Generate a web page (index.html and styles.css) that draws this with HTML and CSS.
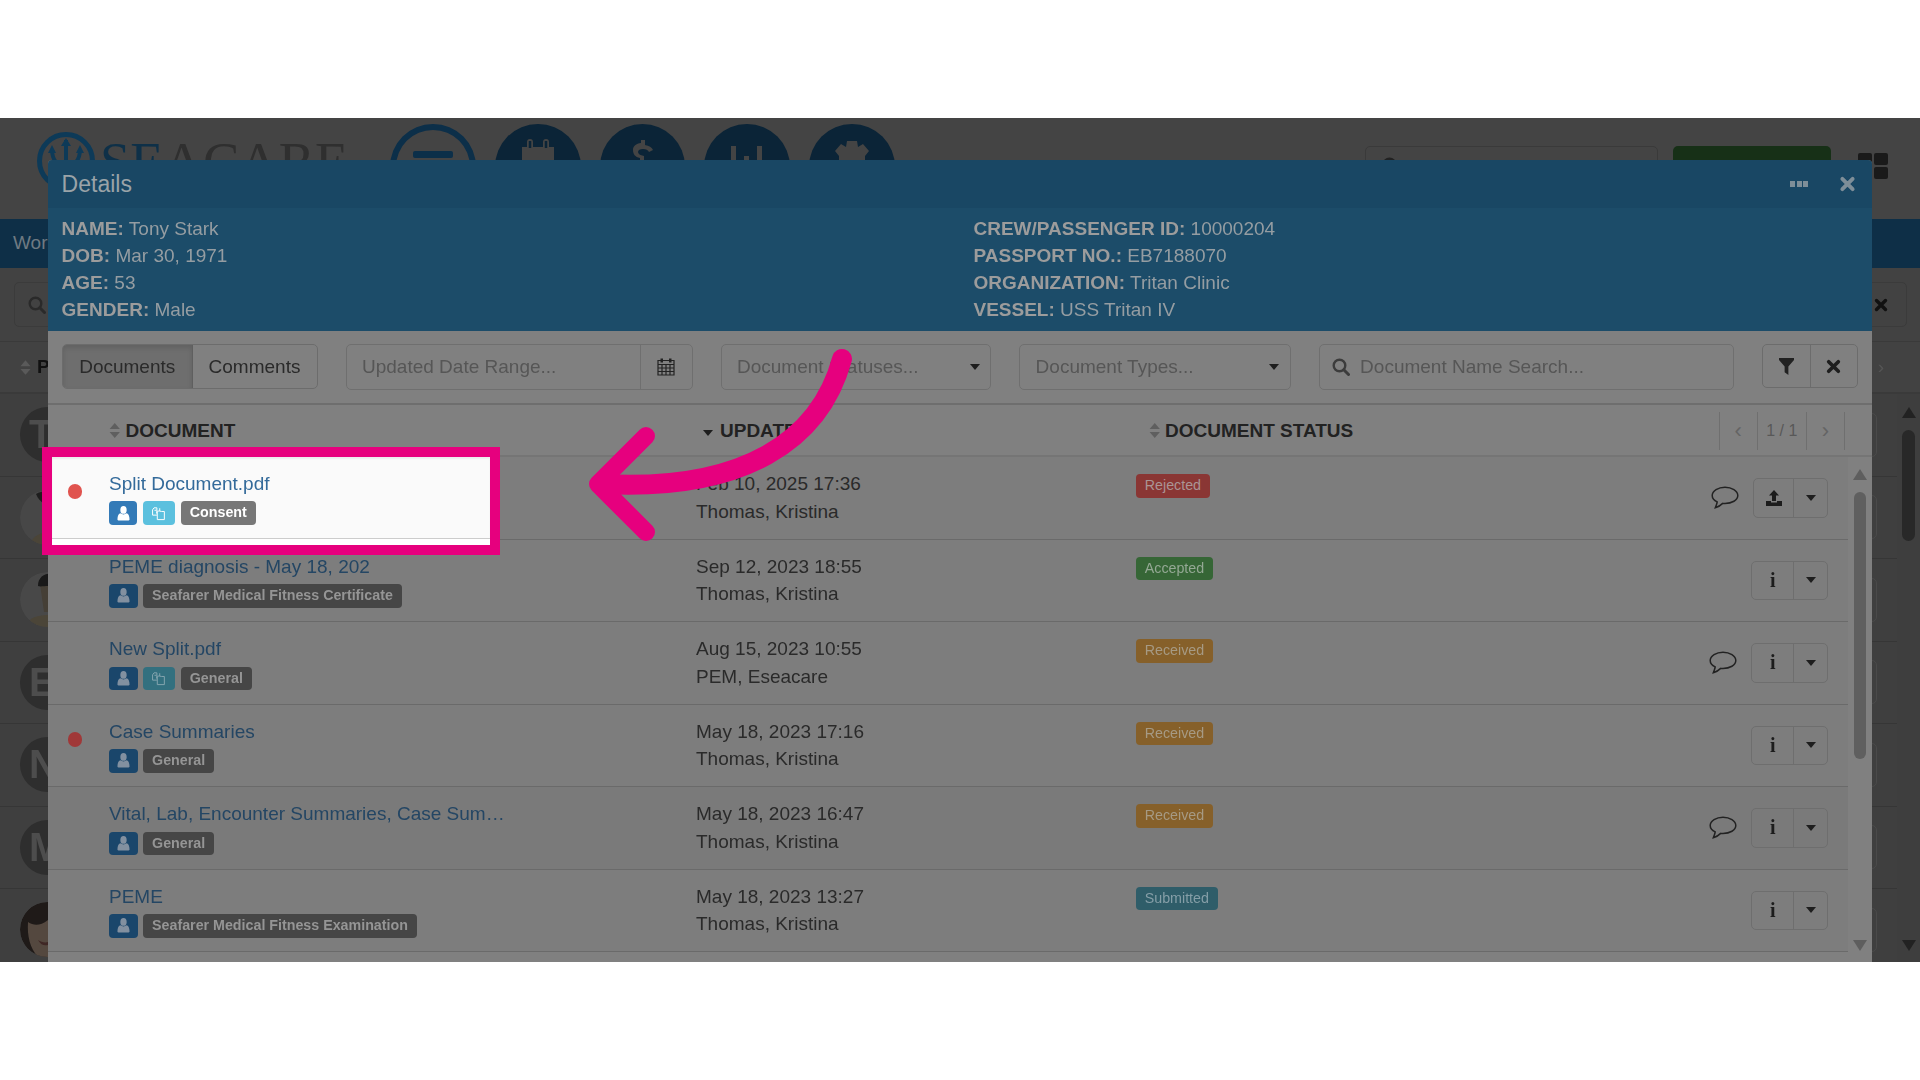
FILE: index.html
```html
<!DOCTYPE html>
<html lang="en">
<head>
  <meta charset="UTF-8">
  <title>Seacare - Details</title>
  <link rel="stylesheet" href="styles.css">
</head>
<body>
  <svg class="defs" width="0" height="0">
    <symbol id="i-sort" viewBox="0 0 12 16"><path d="M6 0l5.500 6.500H.5zM6 16L.5 9.500h11z"/></symbol>
    <symbol id="i-user" viewBox="0 0 14 16"><ellipse cx="7" cy="4.200" rx="3.400" ry="4.200"/><path d="M1.500 15.500c-.8 0-1-.5-1-1.200C.5 10.500 1.800 8 3.800 7.800c1.900 1.600 4.500 1.600 6.400 0 2 .2 3.300 2.700 3.300 6.500 0 .7-.2 1.200-1 1.200z"/></symbol>
    <symbol id="i-files" viewBox="0 0 16 16"><path d="M6 1H2.500L.7 3.500V10H6M6 1v3H3M6 5h3.500V1.500M6 5l-.5 3M6.500 5.500v10h8.700V5.500H11.500L9.500 5" fill="none" stroke="currentColor" stroke-width="1.200"/></symbol>
    <symbol id="i-times" viewBox="0 0 14 14"><path d="M2.500 2.500l9 9M11.500 2.500l-9 9" fill="none" stroke="currentColor" stroke-width="3.400" stroke-linecap="round"/></symbol>
    <symbol id="i-search" viewBox="0 0 18 18"><circle cx="7.500" cy="7.500" r="5.800" fill="none" stroke="currentColor" stroke-width="2.400"/><path d="M11.800 11.800l4.700 4.700" stroke="currentColor" stroke-width="3" stroke-linecap="round"/></symbol>
    <symbol id="i-chat" viewBox="0 0 28 23"><path d="M14 1.200C7.200 1.200 1.200 4.800 1.200 9.500c0 2.800 2 5 5 6.400-.1 1.600-.8 3.300-1.900 5.800 3-.8 5.600-2.500 7.400-4.300 1 .1 1.600.1 2.300.1 6.800 0 12.800-3.300 12.800-8C26.800 4.800 20.800 1.200 14 1.200z" fill="none" stroke="currentColor" stroke-width="1.500"/></symbol>
  </svg>

  <div class="band"></div>

  <div class="stage">
    <!-- page behind the dialog -->
    <div class="page">
      <header class="topbar">
        <div class="logo">
          <svg class="logo-mark" viewBox="0 0 58 58"><circle cx="29" cy="29" r="26.500" fill="none" stroke="#0d3a58" stroke-width="5"/><path d="M29 8v42M15 17c0 12 6 17 14 17s14-5 14-17" fill="none" stroke="#0d3a58" stroke-width="4"/><path d="M29 6l-5 8h10zM15 13l-4 8h8zM43 13l-4 8h8z" fill="#0d3a58"/></svg>
          <span class="logo-text"><span class="logo-blue">SE</span>ACARE</span>
        </div>
        <div class="circles">
          <div class="circle circle-ring"><span class="ring-bar"></span></div>
          <div class="circle">
            <svg class="circle-icon" viewBox="0 0 40 30"><path d="M4 30V9h5V4a3 3 0 0 1 6 0v5h10V4a3 3 0 0 1 6 0v5h5v21z" fill="#444"/><path d="M12 3v7M28 3v7" stroke="#0b2437" stroke-width="2.500"/></svg>
          </div>
          <div class="circle">
            <svg class="circle-icon" viewBox="0 0 40 30"><path d="M18 2h4v5c4 .5 7 2.500 8 5l-4 2c-1-2-3-3-6-3-3 0-5 1-5 3s2 3 6 4v12h-4V20c-5-1-7-4-7-8s3-6.500 8-7z" fill="#444"/></svg>
          </div>
          <div class="circle">
            <svg class="circle-icon" viewBox="0 0 40 30"><path d="M4 8h5v22H4zM17 18h5v12h-5zM30 8h5v22h-5z" fill="#444"/></svg>
          </div>
          <div class="circle">
            <svg class="circle-icon" viewBox="0 0 40 30"><path d="M15 3h10l1 6 5-3 6 7-4 5v12H7V18l-4-5 6-7 5 3z" fill="#444"/></svg>
          </div>
        </div>
        <div class="top-search"><svg class="top-search-icon"><use href="#i-search"/></svg></div>
        <div class="top-green"></div>
        <div class="top-grid"><i></i><i></i><i></i><i></i></div>
      </header>

      <nav class="navstrip">Worklist</nav>

      <div class="page-search">
        <div class="page-search-box">
          <svg class="page-search-icon"><use href="#i-search"/></svg>
          <svg class="page-search-x"><use href="#i-times"/></svg>
        </div>
      </div>

      <div class="page-head">
        <svg class="page-sort"><use href="#i-sort"/></svg><b>PATIENT</b>
        <span class="page-chevron">›</span>
      </div>

      <div class="page-list">
        <div class="page-rows">
          <div class="page-row"><span class="avatar">T</span><span class="page-btn"></span></div>
          <div class="page-row">
            <svg class="avatar-photo" viewBox="0 0 55 55"><circle cx="27.500" cy="27.500" r="27.500" fill="#474747"/><path d="M10 55c2-9 10-13 22-13l14 2v11z" fill="#4b4538"/><path d="M16 4c10-6 24-2 26 10l-8 2c-6 0-14-2-18-12z" fill="#1d1d1d"/><path d="M22 14h20v22H24z" fill="#453f38"/></svg>
            <span class="page-btn"></span>
          </div>
          <div class="page-row">
            <svg class="avatar-photo" viewBox="0 0 55 55"><circle cx="27.500" cy="27.500" r="27.500" fill="#484848"/><path d="M6 55c2-10 12-12 24-12l20 12z" fill="#4b4538"/><path d="M20 12h30v28H24z" fill="#453f36"/><path d="M18 14C18 4 26 0 36 2l14 6v6H28c-4 0-8 1-10 0z" fill="#191919"/></svg>
            <span class="page-btn"></span>
          </div>
          <div class="page-row"><span class="avatar">E</span><span class="page-btn"></span></div>
          <div class="page-row"><span class="avatar">N</span><span class="page-btn"></span></div>
          <div class="page-row"><span class="avatar">M</span><span class="page-btn"></span></div>
          <div class="page-row">
            <svg class="avatar-photo" viewBox="0 0 55 55"><circle cx="27.500" cy="27.500" r="27.500" fill="#1f1a18"/><path d="M8 20c6 4 12 4 20-2l18 4v33H18C10 46 7 34 8 20z" fill="#54483f"/><path d="M18 38c3 2 7 3 10 2l0 3c-4 1-7 0-10-5z" fill="#3f2725"/></svg>
            <span class="page-btn"></span>
          </div>
        </div>
        <div class="page-scroll">
          <span class="tri-up dark"></span>
          <span class="page-thumb"></span>
          <span class="tri-down dark"></span>
        </div>
      </div>
    </div>

    <!-- dialog -->
    <div class="modal">
      <div class="modal-head">
        <span class="modal-title">Details</span>
        <span class="modal-dots"><i></i><i></i><i></i></span>
        <svg class="modal-close"><use href="#i-times"/></svg>
      </div>

      <div class="info">
        <div>
          <p><b>NAME:</b> Tony Stark</p>
          <p><b>DOB:</b> Mar 30, 1971</p>
          <p><b>AGE:</b> 53</p>
          <p><b>GENDER:</b> Male</p>
        </div>
        <div>
          <p><b>CREW/PASSENGER ID:</b> 10000204</p>
          <p><b>PASSPORT NO.:</b> EB7188070</p>
          <p><b>ORGANIZATION:</b> Tritan Clinic</p>
          <p><b>VESSEL:</b> USS Tritan IV</p>
        </div>
      </div>

      <div class="toolbar">
        <div class="tabs">
          <button class="tab tab-active">Documents</button>
          <button class="tab">Comments</button>
        </div>
        <div class="field field-date">
          <span class="field-text">Updated Date Range...</span>
          <span class="field-addon">
            <svg class="cal" viewBox="0 0 18 19"><path d="M1 3.500h16V18H1zM1 7.500h16M1 11h16M1 14.500h16M5 7.500V18M9 7.500V18M13 7.500V18" fill="none" stroke="#222" stroke-width="1.200"/><path d="M3.500 1.500h2.500v4H3.500zM12 1.500h2.500v4H12z" fill="#222"/></svg>
          </span>
        </div>
        <div class="field field-status"><span class="field-text">Document Statuses...</span><span class="caret"></span></div>
        <div class="field field-type"><span class="field-text">Document Types...</span><span class="caret"></span></div>
        <div class="field field-search">
          <svg class="search-icon"><use href="#i-search"/></svg>
          <span class="field-text">Document Name Search...</span>
        </div>
        <div class="filter-btns">
          <button class="filter-btn">
            <svg class="filter-icon" viewBox="0 0 16 18"><path d="M0 0h16v2L10 9v9l-4-3V9L0 2z" fill="#222"/></svg>
          </button>
          <button class="filter-btn"><svg class="x-icon"><use href="#i-times"/></svg></button>
        </div>
      </div>

      <div class="thead">
        <div class="th th-doc"><svg class="sort"><use href="#i-sort"/></svg>DOCUMENT</div>
        <div class="th th-date"><span class="caret caret-sort"></span>UPDATED</div>
        <div class="th th-status"><svg class="sort"><use href="#i-sort"/></svg>DOCUMENT STATUS</div>
        <div class="pager">
          <span class="pager-cell pager-arrow">‹</span>
          <span class="pager-cell pager-num">1 / 1</span>
          <span class="pager-cell pager-arrow">›</span>
        </div>
      </div>

      <div class="tbody">
        <div class="rows">
          <div class="row">
            <div class="cell-dot"></div>
            <div class="cell-doc"></div>
            <div class="cell-date">Feb 10, 2025 17:36<br>Thomas, Kristina</div>
            <div class="cell-status"><span class="status rejected">Rejected</span></div>
            <div class="cell-actions">
              <svg class="chat"><use href="#i-chat"/></svg>
              <div class="split split-upload">
                <button class="split-main">
                  <svg class="upload" viewBox="0 0 16 16"><path d="M8 0l5 5.500H10V11H6V5.500H3zM0 11h5v1.500h6V11h5v5H0z" fill="#1c1c1c"/></svg>
                </button>
                <button class="split-more"><span class="caret"></span></button>
              </div>
            </div>
          </div>

          <div class="row">
            <div class="cell-dot"></div>
            <div class="cell-doc">
              <a class="doc-link">PEME diagnosis - May 18, 202</a>
              <div class="tags">
                <span class="tag tag-user"><svg class="tag-icon"><use href="#i-user"/></svg></span>
                <span class="tag tag-gray">Seafarer Medical Fitness Certificate</span>
              </div>
            </div>
            <div class="cell-date">Sep 12, 2023 18:55<br>Thomas, Kristina</div>
            <div class="cell-status"><span class="status accepted">Accepted</span></div>
            <div class="cell-actions">
              <div class="split">
                <button class="split-main"><span class="info-i">i</span></button>
                <button class="split-more"><span class="caret"></span></button>
              </div>
            </div>
          </div>

          <div class="row">
            <div class="cell-dot"></div>
            <div class="cell-doc">
              <a class="doc-link">New Split.pdf</a>
              <div class="tags">
                <span class="tag tag-user"><svg class="tag-icon"><use href="#i-user"/></svg></span>
                <span class="tag tag-copy"><svg class="tag-icon"><use href="#i-files"/></svg></span>
                <span class="tag tag-gray">General</span>
              </div>
            </div>
            <div class="cell-date">Aug 15, 2023 10:55<br>PEM, Eseacare</div>
            <div class="cell-status"><span class="status received">Received</span></div>
            <div class="cell-actions">
              <svg class="chat"><use href="#i-chat"/></svg>
              <div class="split">
                <button class="split-main"><span class="info-i">i</span></button>
                <button class="split-more"><span class="caret"></span></button>
              </div>
            </div>
          </div>

          <div class="row">
            <div class="cell-dot"><span class="dot"></span></div>
            <div class="cell-doc">
              <a class="doc-link">Case Summaries</a>
              <div class="tags">
                <span class="tag tag-user"><svg class="tag-icon"><use href="#i-user"/></svg></span>
                <span class="tag tag-gray">General</span>
              </div>
            </div>
            <div class="cell-date">May 18, 2023 17:16<br>Thomas, Kristina</div>
            <div class="cell-status"><span class="status received">Received</span></div>
            <div class="cell-actions">
              <div class="split">
                <button class="split-main"><span class="info-i">i</span></button>
                <button class="split-more"><span class="caret"></span></button>
              </div>
            </div>
          </div>

          <div class="row row-hover">
            <div class="cell-dot"></div>
            <div class="cell-doc">
              <a class="doc-link">Vital, Lab, Encounter Summaries, Case Sum…</a>
              <div class="tags">
                <span class="tag tag-user"><svg class="tag-icon"><use href="#i-user"/></svg></span>
                <span class="tag tag-gray">General</span>
              </div>
            </div>
            <div class="cell-date">May 18, 2023 16:47<br>Thomas, Kristina</div>
            <div class="cell-status"><span class="status received">Received</span></div>
            <div class="cell-actions">
              <svg class="chat"><use href="#i-chat"/></svg>
              <div class="split">
                <button class="split-main"><span class="info-i">i</span></button>
                <button class="split-more"><span class="caret"></span></button>
              </div>
            </div>
          </div>

          <div class="row">
            <div class="cell-dot"></div>
            <div class="cell-doc">
              <a class="doc-link">PEME</a>
              <div class="tags">
                <span class="tag tag-user"><svg class="tag-icon"><use href="#i-user"/></svg></span>
                <span class="tag tag-gray">Seafarer Medical Fitness Examination</span>
              </div>
            </div>
            <div class="cell-date">May 18, 2023 13:27<br>Thomas, Kristina</div>
            <div class="cell-status"><span class="status submitted">Submitted</span></div>
            <div class="cell-actions">
              <div class="split">
                <button class="split-main"><span class="info-i">i</span></button>
                <button class="split-more"><span class="caret"></span></button>
              </div>
            </div>
          </div>
        </div>

        <div class="list-scroll">
          <span class="tri-up"></span>
          <span class="list-thumb"></span>
          <span class="tri-down"></span>
        </div>
      </div>
    </div>

    <!-- highlighted row with the tutorial frame -->
    <div class="spot">
      <div class="spot-row">
        <span class="dot dot-bright"></span>
        <div class="spot-doc">
          <a class="doc-link doc-link-bright">Split Document.pdf</a>
          <div class="tags">
            <span class="tag tag-user-bright"><svg class="tag-icon"><use href="#i-user"/></svg></span>
            <span class="tag tag-copy-bright"><svg class="tag-icon"><use href="#i-files"/></svg></span>
            <span class="tag tag-gray-bright">Consent</span>
          </div>
        </div>
      </div>
    </div>

    <svg class="arrow" viewBox="0 118 1920 844">
      <path d="M842 359C820 440 745 492 600 484" fill="none" stroke="#e6007e" stroke-width="20" stroke-linecap="round"/>
      <path d="M646 436L598 484L646 532" fill="none" stroke="#e6007e" stroke-width="18" stroke-linecap="round" stroke-linejoin="round"/>
    </svg>
  </div>

  <div class="band"></div>
</body>
</html>
```

FILE: styles.css
```css
* {
  box-sizing: border-box;
}
html, body {
  margin: 0;
  padding: 0;
  height: 1080px;
  overflow: hidden;
  background: #fff;
}
body {
  font-family: "Liberation Sans", Arial, sans-serif;
  font-size: 19px;
  line-height: 27.2px;
  color: #2a2a2a;
}
.defs {
  position: absolute;
}
.band {
  height: 118px;
  background: #fff;
}
.stage {
  position: relative;
  height: 844px;
  overflow: hidden;
  background: #424242;
}

/* the source is a soft video frame */
.page, .modal, .spot-row {
  filter: blur(.4px);
}

/* page behind the dialog */
.topbar {
  height: 101px;
  display: flex;
  background: #444;
  padding-top: 6px;
}
.logo {
  flex: none;
  width: 390px;
  padding: 8px 0 0 37px;
  display: flex;
  height: 70px;
}
.logo-mark {
  width: 58px;
  height: 58px;
  flex: none;
}
.logo-text {
  font-family: "Liberation Serif", serif;
  font-size: 54.5px;
  line-height: 60px;
  margin-left: 5px;
  color: #2f2f2f;
}
.logo-blue {
  color: #0e3048;
}
.circles {
  display: flex;
  flex: none;
  gap: 19px;
  width: 505px;
}
.circle {
  width: 86px;
  height: 86px;
  border-radius: 50%;
  background: #0b2437;
  display: flex;
  justify-content: center;
  padding-top: 14px;
}
.circle-ring {
  background: none;
  border: 6px solid #0c2f49;
  padding-top: 21px;
}
.ring-bar {
  width: 40px;
  height: 7px;
  background: #0c2f49;
  border-radius: 2px;
}
.circle-icon {
  width: 40px;
  height: 30px;
}
.top-search {
  flex: none;
  width: 293px;
  height: 50px;
  margin: 22px 0 0 470px;
  border: 1px solid #3a3a3a;
  border-radius: 5px;
  padding: 8px 0 0 16px;
}
.top-search-icon {
  width: 18px;
  height: 18px;
  color: #222;
}
.top-green {
  flex: none;
  width: 158px;
  height: 50px;
  margin: 22px 0 0 15px;
  background: #173017;
  border-radius: 5px;
}
.top-grid {
  flex: none;
  width: 30px;
  height: 50px;
  margin: 29px 0 0 27px;
  display: grid;
  grid-template-columns: 14px 14px;
  grid-auto-rows: 12px;
  gap: 2px;
}
.top-grid i {
  background: #1a1a1a;
  border-radius: 2px;
}
.navstrip {
  height: 49px;
  line-height: 48px;
  padding-left: 13px;
  background: #0e2f47;
  color: #6f7a82;
}
.page-search {
  height: 74px;
  padding: 14px 13px 0 14px;
  border-bottom: 1px solid #3a3a3a;
}
.page-search-box {
  height: 45px;
  border: 1px solid #3b3b3b;
  border-radius: 5px;
  display: flex;
  justify-content: space-between;
  align-items: center;
  padding: 0 18px 0 13px;
}
.page-search-icon {
  width: 18px;
  height: 18px;
  color: #2a2a2a;
}
.page-search-x {
  width: 14px;
  height: 14px;
  color: #111;
}
.page-head {
  height: 52px;
  display: flex;
  align-items: center;
  padding-left: 20px;
  border-bottom: 2px solid #3a3a3a;
  color: #111;
}
.page-sort {
  width: 11px;
  height: 15px;
  margin-right: 6px;
  fill: #5a5a5a;
}
.page-chevron {
  margin-left: auto;
  margin-right: 36px;
  color: #555;
}
.page-list {
  display: flex;
  height: 600px;
}
.page-rows {
  flex: 1;
}
.page-row {
  height: 82.5px;
  display: flex;
  align-items: center;
  justify-content: space-between;
  padding-left: 20px;
  background: #3f3f3f;
  border-bottom: 1px solid #363636;
}
.avatar, .avatar-photo {
  width: 55px;
  height: 55px;
  border-radius: 50%;
  flex: none;
}
.avatar {
  background: #2e2e2e;
  color: #4d4d4d;
  font-weight: bold;
  font-size: 40px;
  line-height: 55px;
  text-align: left;
  padding-left: 9px;
}
.page-btn {
  width: 30px;
  height: 44px;
  border: 1px solid #4a4a4a;
  border-radius: 5px;
  margin-right: 20px;
}
.page-scroll {
  width: 23px;
  position: relative;
  display: flex;
  flex-direction: column;
  align-items: center;
  padding-top: 13px;
  background: #3e3e3e;
}
.page-thumb {
  width: 13px;
  height: 111px;
  margin: 12px 0 0;
  border-radius: 7px;
  background: #282828;
}
.page-scroll .tri-down {
  position: absolute;
  top: 546px;
}
.tri-up, .tri-down {
  width: 0;
  height: 0;
  border-left: 7px solid transparent;
  border-right: 7px solid transparent;
}
.tri-up {
  border-bottom: 11px solid #5e5e5e;
}
.tri-down {
  border-top: 11px solid #5e5e5e;
}
.tri-up.dark {
  border-bottom-color: #222;
}
.tri-down.dark {
  border-top-color: #222;
}

/* dialog */
.modal {
  position: absolute;
  left: 48px;
  top: 42px;
  width: 1824px;
  height: 802px;
  background: #808080;
  border-radius: 4px 4px 0 0;
  overflow: hidden;
}
.modal-head {
  height: 48px;
  background: #194764;
  display: flex;
  align-items: center;
  padding: 1px 0 0 13.6px;
  color: #9aa3a8;
}
.modal-title {
  font-size: 23px;
  flex: 1;
}
.modal-dots {
  display: flex;
  gap: 1.5px;
  margin: -1px 31px 0 0;
}
.modal-dots i {
  width: 5px;
  height: 6px;
  background: #7e8e98;
}
.modal-close {
  width: 17px;
  height: 16px;
  margin: -1px 16px 0 0;
  color: #7e8e98;
}
.info {
  height: 122.5px;
  background: #1c4c69;
  padding: 6.8px 0 0 13.6px;
  display: grid;
  grid-template-columns: 911.9px 1fr;
  color: #959da2;
}
.info p {
  margin: 0;
}
.info b {
  color: #9c9c9c;
}
.toolbar {
  height: 74.5px;
  padding: 13.5px 0 0 14px;
  display: flex;
  gap: 28px;
  border-bottom: 2px solid #6e6e6e;
}
.tabs {
  display: flex;
  height: 44.5px;
  width: 255.5px;
  border: 1px solid #6c6c6c;
  border-radius: 5px;
  overflow: hidden;
}
.tab {
  font: inherit;
  color: #2a2a2a;
  background: none;
  border: 0;
  flex: 1;
  padding: 0;
}
.tab-active {
  flex: none;
  width: 129.5px;
  background: #6e6e6e;
  border-right: 1px solid #5f5f5f;
  box-shadow: inset 0 3px 5px rgba(0,0,0,.12);
}
.field {
  height: 45.5px;
  border: 1px solid #6f6f6f;
  border-radius: 5px;
  display: flex;
  align-items: center;
  padding-left: 15.5px;
  color: #565656;
}
.field-text {
  flex: 1;
}
.field-date {
  width: 347px;
  padding-right: 0;
}
.field-addon {
  width: 51.5px;
  height: 100%;
  border-left: 1px solid #6f6f6f;
  display: flex;
  align-items: center;
  justify-content: center;
}
.cal {
  width: 18px;
  height: 19px;
}
.field-status {
  width: 270.6px;
  padding-right: 10px;
}
.field-type {
  width: 272px;
  padding-right: 11px;
}
.field-search {
  width: 414.6px;
  padding-left: 12px;
}
.search-icon {
  width: 18px;
  height: 18px;
  color: #3c3c3c;
  margin-right: 10px;
}
.caret {
  display: inline-block;
  width: 0;
  height: 0;
  border-left: 5px solid transparent;
  border-right: 5px solid transparent;
  border-top: 6px solid #1e1e1e;
}
.filter-btns {
  width: 96.7px;
  height: 44px;
  display: flex;
  border: 1px solid #6c6c6c;
  border-radius: 5px;
}
.filter-btn {
  flex: 1;
  background: none;
  border: 0;
  padding: 0;
  display: flex;
  align-items: center;
  justify-content: center;
}
.filter-btn + .filter-btn {
  border-left: 1px solid #6c6c6c;
}
.filter-icon {
  width: 15px;
  height: 17px;
}
.x-icon {
  width: 15px;
  height: 15px;
  color: #1e1e1e;
}
.thead {
  height: 52px;
  padding-top: 1.5px;
  display: flex;
  align-items: center;
  font-weight: bold;
  color: #222;
  border-bottom: 2px solid #757575;
  position: relative;
}
.th {
  display: flex;
  align-items: center;
}
.sort {
  width: 11.5px;
  height: 15px;
  margin-right: 5px;
  fill: #5f5f5f;
}
.th-doc {
  width: 655px;
  padding-left: 61px;
}
.th-date {
  width: 445.5px;
}
.caret-sort {
  margin-right: 7px;
  margin-top: 4px;
}
.pager {
  margin-left: auto;
  margin-right: 27px;
  display: flex;
  height: 38px;
  border-left: 1px solid #6f6f6f;
  font-weight: normal;
  color: #585858;
  font-size: 16px;
}
.pager-cell {
  display: flex;
  align-items: center;
  justify-content: center;
  border-right: 1px solid #6f6f6f;
}
.pager-arrow {
  width: 38px;
  font-size: 22px;
  color: #646464;
}
.pager-num {
  width: 49.4px;
}
.tbody {
  display: flex;
  height: 505px;
}
.rows {
  width: 1800px;
  flex: none;
}
.row {
  height: 82.5px;
  display: grid;
  grid-template-columns: 61px 587px 440px 1fr auto;
  background: #7d7d7d;
  border-bottom: 1px solid #6a6a6a;
}
.row-hover {
  background: #7a7a7a;
}
.cell-dot {
  padding: 27.5px 0 0 19.7px;
}
.dot {
  display: block;
  width: 14.7px;
  height: 14.7px;
  border-radius: 50%;
  background: #a03838;
}
.cell-doc, .cell-date {
  padding-top: 13.4px;
}
.doc-link {
  display: block;
  color: #244664;
}
.tags {
  display: flex;
  gap: 5.7px;
  margin-top: 4.2px;
}
.tag {
  height: 23.3px;
  border-radius: 4px;
  font-size: 14.25px;
  font-weight: bold;
  line-height: 23.3px;
  padding: 0 8.9px;
  display: flex;
  align-items: center;
}
.tag-icon {
  width: 13px;
  height: 15px;
  fill: currentColor;
}
.tag-user {
  width: 28.5px;
  padding: 0 7.7px;
  background: #1a466b;
  color: #8290a0;
}
.tag-copy {
  width: 32px;
  padding: 0 9px;
  background: #33707f;
  color: #86a6b0;
}
.tag-gray {
  background: #464646;
  color: #959595;
}
.cell-status {
  padding-top: 17.3px;
}
.status {
  display: inline-block;
  height: 23.4px;
  line-height: 23.4px;
  padding: 0 8.75px;
  border-radius: 4px;
  font-size: 14.25px;
  vertical-align: top;
}
.rejected {
  background: #8a3634;
  color: #ab9494;
}
.accepted {
  background: #366636;
  color: #94a894;
}
.received {
  background: #86602a;
  color: #a69a84;
}
.submitted {
  background: #2f5d69;
  color: #859ea7;
}
.cell-actions {
  display: flex;
  align-items: center;
  justify-content: flex-end;
  padding-right: 20px;
  gap: 14px;
}
.chat {
  width: 28px;
  height: 23px;
  color: #222;
}
.split {
  display: flex;
  width: 76.7px;
  height: 39.5px;
  border: 1px solid #6e6e6e;
  border-radius: 5px;
}
.split-upload {
  width: 75.3px;
}
.split-main, .split-more {
  background: none;
  border: 0;
  padding: 0;
  display: flex;
  align-items: center;
  justify-content: center;
}
.split-main {
  flex: 1;
  border-right: 1px solid #6e6e6e;
}
.split-more {
  width: 32.7px;
}
.info-i {
  font-family: "Liberation Serif", serif;
  font-weight: bold;
  font-size: 20px;
  color: #1c1c1c;
}
.upload {
  width: 16px;
  height: 16px;
}
.list-scroll {
  flex: 1;
  position: relative;
  display: flex;
  flex-direction: column;
  align-items: center;
  padding-top: 12px;
}
.list-thumb {
  width: 12.7px;
  height: 267.6px;
  margin-top: 11.7px;
  border-radius: 7px;
  background: #5f5f5f;
}
.list-scroll .tri-down {
  position: absolute;
  top: 483px;
}

/* highlighted row */
.spot {
  position: absolute;
  left: 41.5px;
  top: 328.7px;
  width: 458.5px;
  height: 108.3px;
  border: 10.5px solid #e6007e;
  background: #fff;
}
.spot-row {
  height: 82.8px;
  background: #fafafa;
  border-bottom: 1px solid #ccc;
  box-shadow: inset 0 2px 2px rgba(0,0,0,.06);
  display: flex;
  padding-left: 16px;
}
.dot-bright {
  background: #e0534e;
  margin-top: 27.5px;
  flex: none;
}
.spot-doc {
  padding: 13.4px 0 0 26.8px;
}
.doc-link-bright {
  color: #336a9a;
}
.tag-user-bright {
  width: 28.5px;
  padding: 0 7.7px;
  background: #337ab7;
  color: #fff;
}
.tag-copy-bright {
  width: 32px;
  padding: 0 9px;
  background: #5bc0de;
  color: #fff;
}
.tag-gray-bright {
  background: #777;
  color: #fff;
}
.arrow {
  position: absolute;
  left: 0;
  top: 0;
  width: 1920px;
  height: 844px;
  pointer-events: none;
}
```
